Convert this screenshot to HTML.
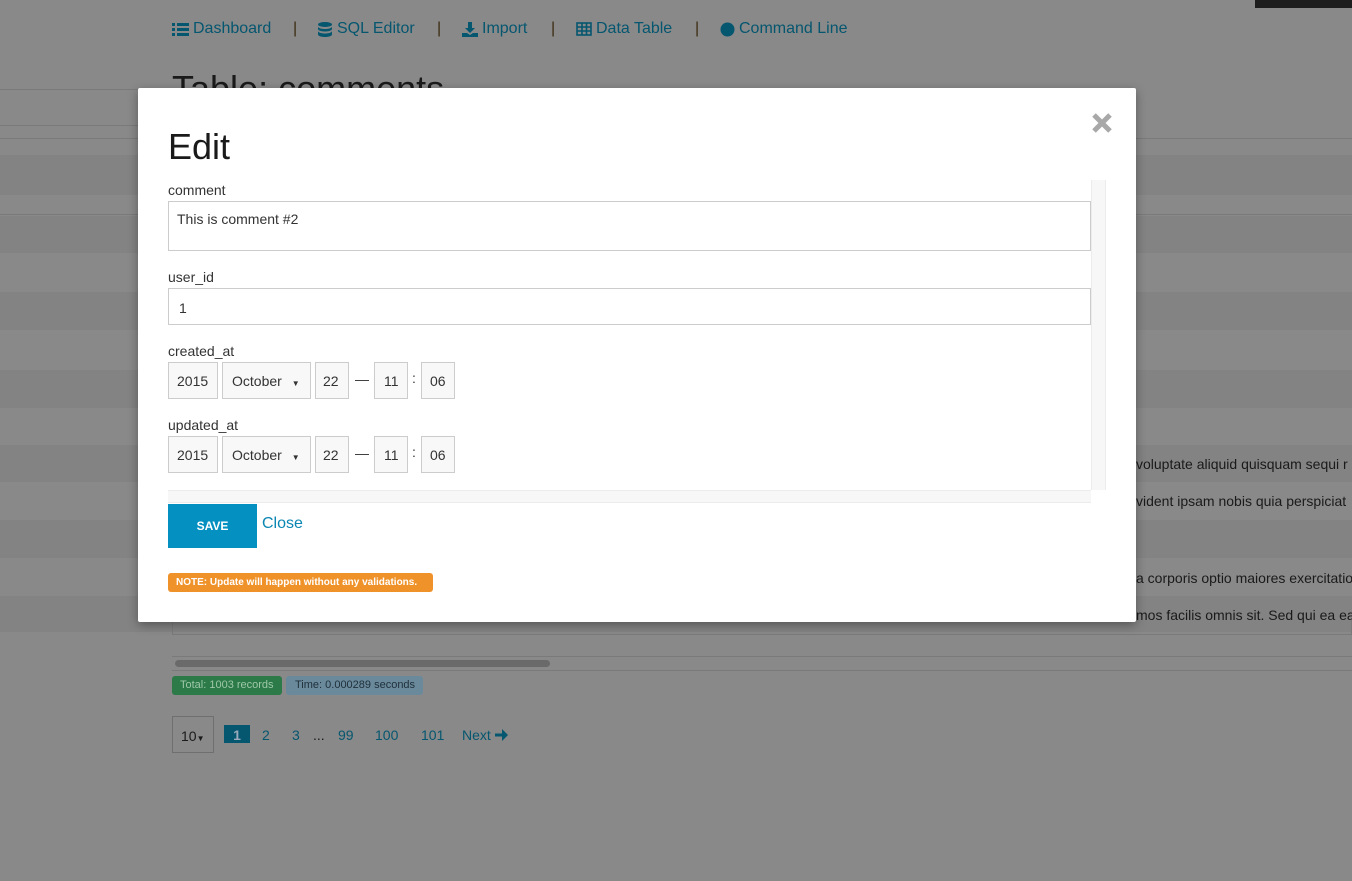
<!DOCTYPE html>
<html><head><meta charset="utf-8"><style>
*{box-sizing:border-box;margin:0;padding:0}
body{width:1352px;height:881px;overflow:hidden;background:#898989;font-family:"Liberation Sans",Arial,sans-serif;position:relative;color:#222}
.a{position:absolute}
.nv{top:19px;font-size:16px;line-height:20px;color:#05566f;white-space:nowrap}
.nv svg{position:absolute;left:0;top:3px}
.sp{top:19px;font-size:16px;line-height:20px;color:#3a2a10}
.band{left:0;width:1352px;background:#838383}
.line{left:0;width:1352px;height:1px;background:#7a7a7a}
.bt{font-size:14px;color:#1a1a1a;white-space:nowrap}
.modal{left:138px;top:88px;width:998px;height:534px;background:#fff;box-shadow:0 3px 10px rgba(0,0,0,.35);border-radius:2px}
.lbl{font-size:14px;color:#333}
.inp{border:1px solid #ccc;background:#fff;font-size:14px;color:#333}
.sel{border:1px solid #ccc;background:#f8f8f8;height:37px;font-size:14px;color:#333;padding-top:10px}
.pg{top:727px;font-size:14px;color:#05566f}
</style></head><body>
<div class="a nv" style="left:172px;padding-left:21px"><svg width="17" height="14" viewBox="0 0 17 14" fill="#05566f"><rect x="0" y="1" width="3" height="3"/><rect x="0" y="6" width="3" height="3"/><rect x="0" y="11" width="3" height="3"/><rect x="5" y="1" width="12" height="3"/><rect x="5" y="6" width="12" height="3"/><rect x="5" y="11" width="12" height="3"/></svg>Dashboard</div>
<div class="a sp" style="left:293px">|</div>
<div class="a nv" style="left:318px;padding-left:19px"><svg width="14" height="15" viewBox="0 0 14 15" fill="#05566f"><ellipse cx="7" cy="2.5" rx="7" ry="2.5"/><path d="M0 4.5c0 1.4 3 2.5 7 2.5s7-1.1 7-2.5v2.5c0 1.4-3 2.5-7 2.5S0 8.4 0 7z"/><path d="M0 9c0 1.4 3 2.5 7 2.5S14 10.4 14 9v3.5C14 13.9 11 15 7 15s-7-1.1-7-2.5z"/></svg>SQL Editor</div>
<div class="a sp" style="left:437px">|</div>
<div class="a nv" style="left:462px;padding-left:20px"><svg width="16" height="15" viewBox="0 0 16 15" fill="#05566f"><path d="M6 0h4v6h3l-5 5-5-5h3z"/><path d="M0 11h5l3 2 3-2h5v4H0z"/></svg>Import</div>
<div class="a sp" style="left:551px">|</div>
<div class="a nv" style="left:576px;padding-left:20px"><svg width="16" height="14" viewBox="0 0 16 14" fill="none" stroke="#05566f" stroke-width="1.6"><rect x="1" y="1" width="14" height="12"/><path d="M1 5h14M1 9h14M6 1v12M10.5 1v12"/></svg>Data Table</div>
<div class="a sp" style="left:695px">|</div>
<div class="a nv" style="left:720px;padding-left:19px"><svg width="15" height="15" viewBox="0 0 15 15"><circle cx="7.5" cy="7.5" r="7" fill="#05566f"/></svg>Command Line</div>
<div class="a" style="left:1255px;top:0;width:97px;height:8px;background:#1e1e1e"></div>
<div class="a" style="left:172px;top:68px;font-size:36px;color:#1a1a1a">Table: comments</div>
<div class="a" style="left:0;top:89px;width:140px;height:37px;border-top:1px solid #7a7a7a;border-bottom:1px solid #7a7a7a"></div>
<div class="a line" style="top:138px"></div>
<div class="a band" style="top:155px;height:40px"></div>
<div class="a line" style="top:214px"></div>
<div class="a band" style="top:216px;height:37px"></div>
<div class="a band" style="top:292px;height:38px"></div>
<div class="a band" style="top:370px;height:38px"></div>
<div class="a band" style="top:445px;height:37px"></div>
<div class="a band" style="top:520px;height:38px"></div>
<div class="a band" style="top:596px;height:36px"></div>
<div class="a bt" style="left:1136px;top:456px">voluptate aliquid quisquam sequi r</div>
<div class="a bt" style="left:1136px;top:493px">vident ipsam nobis quia perspiciat</div>
<div class="a bt" style="left:1136px;top:570px">a corporis optio maiores exercitatio</div>
<div class="a bt" style="left:1136px;top:607px">mos facilis omnis sit. Sed qui ea ea</div>
<div class="a" style="left:172px;top:620px;width:1180px;height:15px;border:1px solid #7a7a7a;border-top:none"></div>
<div class="a line" style="left:172px;top:656px;width:1180px"></div>
<div class="a line" style="left:172px;top:670px;width:1180px"></div>
<div class="a" style="left:175px;top:660px;width:375px;height:7px;border-radius:4px;background:#6a6a6a"></div>
<div class="a" style="left:172px;top:676px;width:110px;height:19px;background:#2b7a48;border-radius:3px;color:#9fc8a8;font-size:11px;padding:3px 0 0 8px;white-space:nowrap">Total: 1003 records</div>
<div class="a" style="left:286px;top:676px;width:137px;height:19px;background:#6a8a9c;border-radius:3px;color:#1f2f3a;font-size:11px;padding:3px 0 0 9px;white-space:nowrap">Time: 0.000289 seconds</div>
<div class="a" style="left:172px;top:716px;width:42px;height:37px;border:1px solid #6f6f6f;font-size:14px;color:#1a1a1a;padding:11px 0 0 8px">10<span style="font-size:8px">▼</span></div>
<div class="a" style="left:224px;top:725px;width:26px;height:18px;background:#05566f;color:#9ab;font-size:14px;text-align:center;padding-top:2px;font-weight:bold">1</div>
<div class="a pg" style="left:262px">2</div>
<div class="a pg" style="left:292px">3</div>
<div class="a pg" style="left:313px;color:#1a1a1a">...</div>
<div class="a pg" style="left:338px">99</div>
<div class="a pg" style="left:375px">100</div>
<div class="a pg" style="left:421px">101</div>
<div class="a pg" style="left:462px;white-space:nowrap">Next <svg width="13" height="12" viewBox="0 0 13 12" fill="#05566f" style="vertical-align:-1px"><path d="M0 4.5h7V0l6 6-6 6V7.5H0z"/></svg></div>

<div class="a modal"></div>
<div class="a" style="left:1091px;top:112px"><svg width="22" height="22" viewBox="0 0 22 22" stroke="#a8a8a8" stroke-width="5"><path d="M3 3l16 16M19 3L3 19"/></svg></div>
<div class="a" style="left:168px;top:126px;font-size:36px;color:#1a1a1a">Edit</div>
<div class="a" style="left:1091px;top:180px;width:15px;height:310px;background:#f7f7f7;border-left:1px solid #ececec;border-right:1px solid #ececec"></div>
<div class="a" style="left:168px;top:490px;width:923px;height:13px;background:#f7f7f7;border-top:1px solid #ececec;border-bottom:1px solid #ececec"></div>
<div class="a lbl" style="left:168px;top:182px">comment</div>
<div class="a inp" style="left:168px;top:201px;width:923px;height:50px;padding:9px 8px">This is comment #2</div>
<div class="a lbl" style="left:168px;top:269px">user_id</div>
<div class="a inp" style="left:168px;top:288px;width:923px;height:37px;padding:11px 10px">1</div>
<div class="a lbl" style="left:168px;top:343px">created_at</div>
<div class="a lbl" style="left:168px;top:417px">updated_at</div>
<div class="a sel" style="left:168px;top:362px;width:50px;padding-left:8px">2015</div>
<div class="a sel" style="left:222px;top:362px;width:89px;padding-left:9px">October <span style="font-size:8px;margin-left:6px">▼</span></div>
<div class="a sel" style="left:315px;top:362px;width:34px;padding-left:7px">22</div>
<div class="a lbl" style="left:355px;top:371px">—</div>
<div class="a sel" style="left:374px;top:362px;width:34px;padding-left:9px">11</div>
<div class="a lbl" style="left:412px;top:370px">:</div>
<div class="a sel" style="left:421px;top:362px;width:34px;padding-left:8px">06</div>
<div class="a sel" style="left:168px;top:436px;width:50px;padding-left:8px">2015</div>
<div class="a sel" style="left:222px;top:436px;width:89px;padding-left:9px">October <span style="font-size:8px;margin-left:6px">▼</span></div>
<div class="a sel" style="left:315px;top:436px;width:34px;padding-left:7px">22</div>
<div class="a lbl" style="left:355px;top:445px">—</div>
<div class="a sel" style="left:374px;top:436px;width:34px;padding-left:9px">11</div>
<div class="a lbl" style="left:412px;top:444px">:</div>
<div class="a sel" style="left:421px;top:436px;width:34px;padding-left:8px">06</div>
<div class="a" style="left:168px;top:504px;width:89px;height:44px;background:#0490c0;color:#fff;font-size:12px;font-weight:bold;text-align:center;padding-top:15px">SAVE</div>
<div class="a" style="left:262px;top:515px;font-size:16px;color:#0a86b3">Close</div>
<div class="a" style="left:168px;top:573px;width:265px;height:19px;background:#f0922a;border-radius:3px;color:#fff;font-size:10px;font-weight:bold;padding:4px 0 0 8px;white-space:nowrap">NOTE: Update will happen without any validations.</div>
</body></html>
